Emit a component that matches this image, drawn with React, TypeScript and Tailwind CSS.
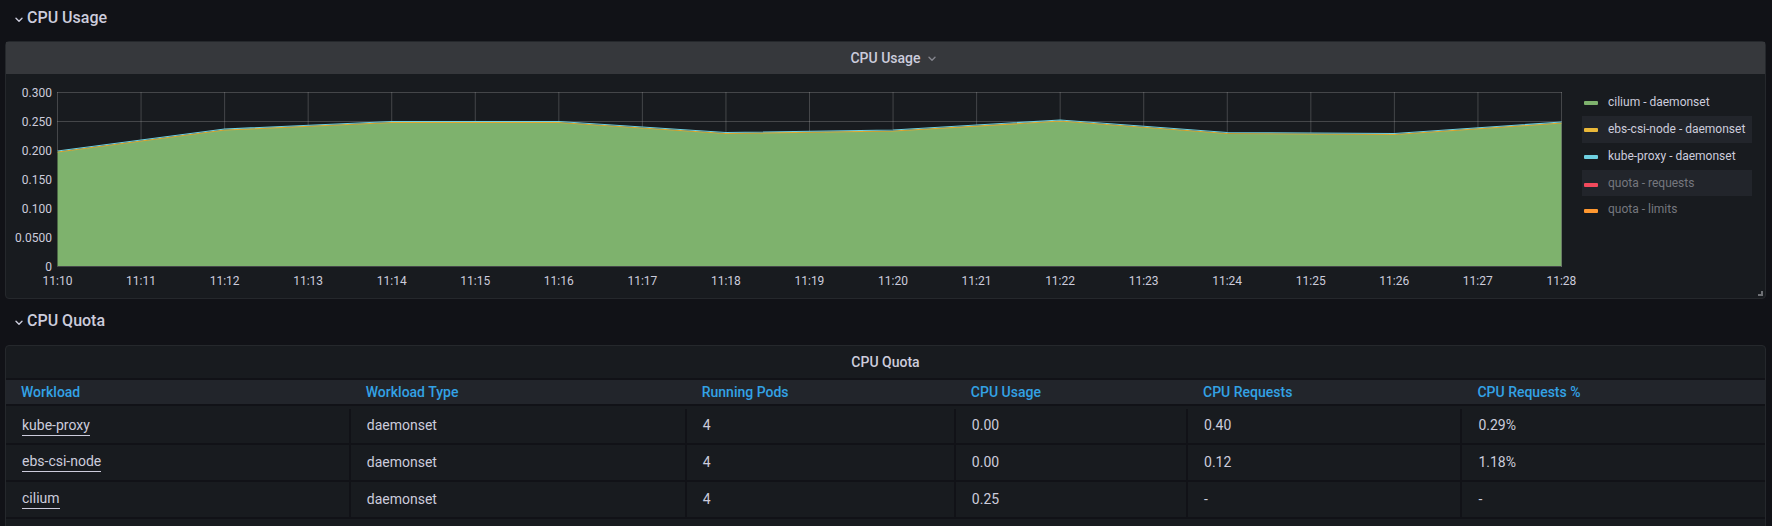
import React from "react";

const ticks = Array.from({ length: 19 }, (_, i) => `11:${10 + i}`);
const yLabels = ["0.300", "0.250", "0.200", "0.150", "0.100", "0.0500", "0"];

const WIDTH = 1505;
const HEIGHT = 175;
const usage = [59, 37, 29.5, 29.5, 40.5, 38, 28, 40.5, 41.5, 30];
const stepX = (WIDTH - 1) / (usage.length - 1);
const linePoints = (offset: number) =>
  usage.map((y, i) => `${(0.5 + i * stepX).toFixed(1)},${y + offset}`).join(" ");

const series = [
  { name: "cilium - daemonset", color: "bg-[#7eb26d]", muted: false },
  { name: "ebs-csi-node - daemonset", color: "bg-[#eab839]", muted: false },
  { name: "kube-proxy - daemonset", color: "bg-[#6ed0e0]", muted: false },
  { name: "quota - requests", color: "bg-[#f2495c]", muted: true },
  { name: "quota - limits", color: "bg-[#ff9830]", muted: true },
];

const columns = [
  { title: "Workload", width: "w-[19.6%]" },
  { title: "Workload Type", width: "w-[19.1%]" },
  { title: "Running Pods", width: "w-[15.3%]" },
  { title: "CPU Usage", width: "w-[13.2%]" },
  { title: "CPU Requests", width: "w-[15.6%]" },
  { title: "CPU Requests %", width: "w-[17.2%]" },
];

const rows = [
  ["kube-proxy", "daemonset", "4", "0.00", "0.40", "0.29%"],
  ["ebs-csi-node", "daemonset", "4", "0.00", "0.12", "1.18%"],
  ["cilium", "daemonset", "4", "0.25", "-", "-"],
];

function Chevron({ className }: { className: string }) {
  return (
    <svg viewBox="0 0 8 6" className={className} fill="none" stroke="currentColor" strokeWidth="1.4" strokeLinecap="round" strokeLinejoin="round" aria-hidden="true">
      <path d="M1 1.3 4 4.3 7 1.3" />
    </svg>
  );
}

function RowHeading({ title, className }: { title: string; className: string }) {
  return (
    <h2 className={className}>
      <button type="button" className="flex items-center gap-1 text-base leading-6 font-medium">
        <Chevron className="mt-1 h-[6px] w-2" />
        {title}
      </button>
    </h2>
  );
}

function UsageChart() {
  return (
    <div className="grid min-w-0 flex-1 grid-cols-[auto_1fr] gap-x-[5px]">
      <div className="flex h-[175px] w-[38px] flex-col items-end justify-between text-xs">
        {yLabels.map((label) => (
          <span key={label} className="flex h-px items-center">{label}</span>
        ))}
      </div>
      <svg viewBox={`0 0 ${WIDTH} ${HEIGHT}`} preserveAspectRatio="none" className="h-[175px] w-full" role="img" aria-label="CPU usage over time">
        <polygon points={`0.5,${HEIGHT - 1} ${linePoints(1)} ${WIDTH - 0.5},${HEIGHT - 1}`} fill="#7eb26d" />
        <g stroke="#c8c8c8" strokeOpacity="0.25" strokeWidth="1">
          {yLabels.slice(0, 2).map((label, i) => (
            <line key={label} x1="0" x2={WIDTH} y1={0.5 + i * 29} y2={0.5 + i * 29} />
          ))}
          {ticks.map((tick, i) => {
            const x = 0.5 + (i * (WIDTH - 1)) / 18;
            const top = i % 2 ? (usage[(i - 1) / 2] + usage[(i + 1) / 2]) / 2 : usage[i / 2];
            return <line key={tick} x1={x} x2={x} y1="0" y2={top} />;
          })}
          <line x1="0" x2={WIDTH} y1={HEIGHT - 0.5} y2={HEIGHT - 0.5} />
          <line x1={WIDTH - 0.5} x2={WIDTH - 0.5} y1="30" y2={HEIGHT} />
        </g>
        <polyline points={linePoints(1)} fill="none" stroke="#e3a92f" strokeWidth="1.2" />
        <polyline points={linePoints(0)} fill="none" stroke="#6ed0e0" strokeWidth="1.1" />
      </svg>
      <div className="col-start-2 mt-[6px] mb-px flex justify-between text-xs">
        {ticks.map((tick) => (
          <span key={tick} className="flex w-px justify-center">{tick}</span>
        ))}
      </div>
    </div>
  );
}

function Legend() {
  return (
    <ul className="w-[170px] shrink-0 text-xs">
      {series.map((item) => (
        <li key={item.name} className="even:bg-[#22252b]">
          <button type="button" className={`flex w-full items-center gap-[10px] pl-[2px] whitespace-nowrap ${item.muted ? "h-[26px] text-[#75777e]" : "h-[27px] pb-[2px]"}`}>
            <span className={`mt-[3px] h-1 w-[14px] shrink-0 rounded-[1px] ${item.color}`} />
            {item.name}
          </button>
        </li>
      ))}
    </ul>
  );
}

export default function App() {
  return (
    <main className="h-screen overflow-hidden bg-[#111217] pr-[6px] pl-[5px] font-[Roboto,sans-serif] text-[#ccccdc]">
      <RowHeading title="CPU Usage" className="px-[10px] pt-[6px] pb-[11px]" />
      <section className="relative rounded-sm border border-[#25282c] bg-[#181b1f]">
        <h3 className="flex h-8 items-center justify-center bg-[#36383c]">
          <button type="button" className="flex items-center gap-[7px] pl-[15px] text-sm font-medium">
            <span>CPU Usage</span>
            <Chevron className="mt-0.5 h-[6px] w-2 text-[#85868e]" />
          </button>
        </h3>
        <div className="flex gap-5 pt-[18px] pr-[13px] pb-[8px] pl-2">
          <UsageChart />
          <div className="-mt-[3px]">
            <Legend />
          </div>
        </div>
        <svg viewBox="0 0 5 5" className="absolute right-[2px] bottom-[2px] h-[5px] w-[5px]" aria-hidden="true">
          <path d="M5 0V5H0V3H3V0Z" fill="#6e7075" />
        </svg>
      </section>
      <RowHeading title="CPU Quota" className="px-[10px] pt-[10px] pb-[12px]" />
      <section className="rounded-sm border border-[#25282c] bg-[#181b1f] pb-8">
        <h3 className="flex h-8 items-center justify-center text-sm font-medium">CPU Quota</h3>
        <table className="w-full table-fixed border-separate border-spacing-0 text-left text-sm">
          <thead>
            <tr>
              {columns.map((column) => (
                <th key={column.title} scope="col" className={`h-7 border-y-2 border-[#111217] bg-[#22252b] px-[15px] py-0 font-medium text-[#33a2e5] ${column.width}`}>
                  <button type="button">{column.title}</button>
                </th>
              ))}
            </tr>
          </thead>
          <tbody>
            <tr aria-hidden="true"><td colSpan={6} className="h-[3px] p-0" /></tr>
            {rows.map((row) => (
              <tr key={row[0]} className="h-[37px] nth-2:h-9">
                {row.map((cell, i) => (
                  <td key={columns[i].title} className="border-r-2 border-b-2 border-[#111217] px-4 pt-0 pb-[2px] last:border-r-0">
                    {i === 0 ? (
                      <a href="#" className="inline-block border-b border-[#ccccdc] leading-5">{cell}</a>
                    ) : (
                      cell
                    )}
                  </td>
                ))}
              </tr>
            ))}
          </tbody>
        </table>
      </section>
    </main>
  );
}
